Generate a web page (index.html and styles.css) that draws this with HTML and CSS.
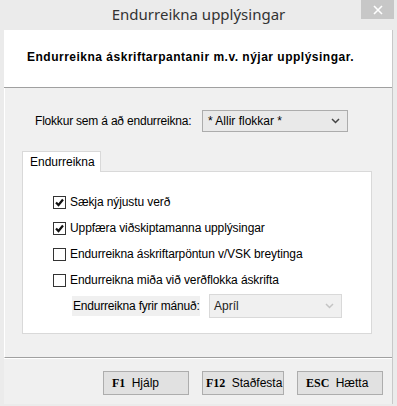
FILE: index.html
```html
<!DOCTYPE html>
<html lang="is">
<head>
    <meta charset="UTF-8">
    <title>Endurreikna upplýsingar</title>
    <link rel="stylesheet" href="styles.css">
</head>
<body>
    <div class="window">
        <div class="titlebar">
            <span class="title">Endurreikna upplýsingar</span>
            <span class="close">
                <svg width="10" height="10" viewBox="0 0 10 10"><path d="M1 1 L9 9 M9 1 L1 9" stroke="#fff" stroke-width="1.6"/></svg>
            </span>
        </div>

        <div class="client">
            <div class="header">Endurreikna áskriftarpantanir m.v. nýjar upplýsingar.</div>

            <div class="main">
                <!-- Flokkur -->
                <div class="field-row">
                    <span class="field-label">Flokkur sem á að endurreikna:</span>
                    <div class="combo">
                        <span>* Allir flokkar *</span>
                        <svg width="9" height="6" viewBox="0 0 9 6"><path d="M1 1 L4.5 4.5 L8 1" fill="none" stroke="#444" stroke-width="1.5"/></svg>
                    </div>
                </div>

                <!-- Flipar -->
                <div class="tabs">
                    <div class="tab-strip">
                        <div class="tab">Endurreikna</div>
                    </div>
                    <div class="tab-panel">
                        <div class="check-row">
                            <span class="checkbox checked"><svg width="11" height="11" viewBox="0 0 11 11"><path d="M2 5.5 L4.5 8 L9 2.5" fill="none" stroke="#111" stroke-width="2.2"/></svg></span>
                            <span>Sækja nýjustu verð</span>
                        </div>
                        <div class="check-row">
                            <span class="checkbox checked"><svg width="11" height="11" viewBox="0 0 11 11"><path d="M2 5.5 L4.5 8 L9 2.5" fill="none" stroke="#111" stroke-width="2.2"/></svg></span>
                            <span>Uppfæra viðskiptamanna upplýsingar</span>
                        </div>
                        <div class="check-row">
                            <span class="checkbox"></span>
                            <span>Endurreikna áskriftarpöntun v/VSK breytinga</span>
                        </div>
                        <div class="check-row">
                            <span class="checkbox"></span>
                            <span>Endurreikna miða við verðflokka áskrifta</span>
                        </div>
                        <div class="month-row">
                            <span class="month-label">Endurreikna fyrir mánuð:</span>
                            <div class="combo disabled">
                                <span>Apríl</span>
                                <svg width="9" height="6" viewBox="0 0 9 6"><path d="M1 1 L4.5 4.5 L8 1" fill="none" stroke="#c4c4c4" stroke-width="1.5"/></svg>
                            </div>
                        </div>
                    </div>
                </div>
            </div>

            <div class="footer">
                <button class="btn btn-f1"><b>F1</b> Hjálp</button>
                <button class="btn btn-f12"><b>F12</b> Staðfesta</button>
                <button class="btn btn-esc"><b>ESC</b> Hætta</button>
            </div>
        </div>
    </div>
</body>
</html>
```

FILE: styles.css
```css
* {
    margin: 0;
    padding: 0;
    box-sizing: border-box;
}

body {
    background: #ebebeb;
    font-family: "Liberation Sans", Arial, sans-serif;
    font-size: 12px;
    color: #000;
}

.window {
    width: 397px;
    height: 406px;
    display: flex;
    flex-direction: column;
}

.titlebar {
    height: 30px;
    display: grid;
    grid-template-columns: 1fr auto 1fr;
}

.title {
    grid-column: 2;
    align-self: center;
    font-family: "Noto Sans", sans-serif;
    font-size: 15px;
    color: #333;
    margin-top: -2px;
}

.close {
    grid-column: 3;
    justify-self: end;
    width: 33px;
    height: 19px;
    margin-right: 3px;
    background: #c7c7c7;
    display: flex;
    align-items: center;
    justify-content: center;
}

.client {
    margin: 0 4px;
    height: 374px;
    display: flex;
    flex-direction: column;
    border-right: 1px solid #c8c8c8;
}

.header {
    height: 58px;
    background: #fff;
    padding: 20px 0 0 23px;
    font-weight: bold;
    font-size: 12px;
    letter-spacing: 0.5px;
    border-bottom: 1px solid #a0a0a0;
}

.main {
    height: 270px;
    background: #f0f0f0;
    border-left: 1px solid #fff;
    border-bottom: 1px solid #a0a0a0;
    padding: 22px 0 0 17px;
}

.field-row {
    display: flex;
    align-items: center;
    padding-left: 13px;
}

.field-label {
    width: 167px;
    letter-spacing: -0.2px;
}

.combo {
    width: 146px;
    height: 22px;
    border: 1px solid #acacac;
    background: #e9e9e9;
    display: flex;
    align-items: center;
    justify-content: space-between;
    padding: 0 7px 0 5px;
}

.combo.disabled {
    width: 133px;
    height: 24px;
    background: #f0f0f0;
    border-color: #d9d9d9;
    padding-left: 4px;
    color: #222;
}

.tabs {
    margin-top: 19px;
    width: 350px;
}

.tab-strip {
    display: flex;
}

.tab {
    width: 79px;
    height: 21px;
    background: #fff;
    border: 1px solid #d9d9d9;
    border-bottom: none;
    padding: 3px 0 0 7px;
    margin-bottom: -1px;
    position: relative;
}

.tab-panel {
    height: 163px;
    background: #fff;
    border: 1px solid #d9d9d9;
    padding: 17px 0 0 30px;
}

.check-row {
    height: 26px;
    display: flex;
    align-items: center;
    gap: 4px;
    letter-spacing: -0.1px;
}

.checkbox {
    width: 13px;
    height: 13px;
    border: 1px solid #333;
    background: #fff;
    display: flex;
    align-items: center;
    justify-content: center;
}

.month-row {
    height: 26px;
    display: flex;
    align-items: center;
    padding-left: 19px;
}

.month-label {
    width: 128px;
    white-space: nowrap;
    letter-spacing: -0.2px;
    background: #f0f0f0;
    margin-right: 9px;
    padding: 3px 0 3px 1px;
}

.footer {
    flex: 1;
    background: #f0f0f0;
    border-top: 1px solid #fff;
    display: flex;
    justify-content: flex-end;
    align-items: flex-start;
    gap: 13px;
    padding: 12px 9px 0 0;
}

.btn {
    height: 24px;
    background: #e1e1e1;
    border: 1px solid #adadad;
    font-family: "Liberation Sans", Arial, sans-serif;
    font-size: 12px;
    color: #000;
    text-align: left;
    padding-left: 8px;
}

.btn b {
    font-family: "Liberation Serif", serif;
    font-size: 12px;
    margin-right: 3px;
}

.btn-f1 {
    width: 86px;
}

.btn-f12 {
    width: 82px;
    padding-left: 3px;
}

.btn-esc {
    width: 86px;
}
```
